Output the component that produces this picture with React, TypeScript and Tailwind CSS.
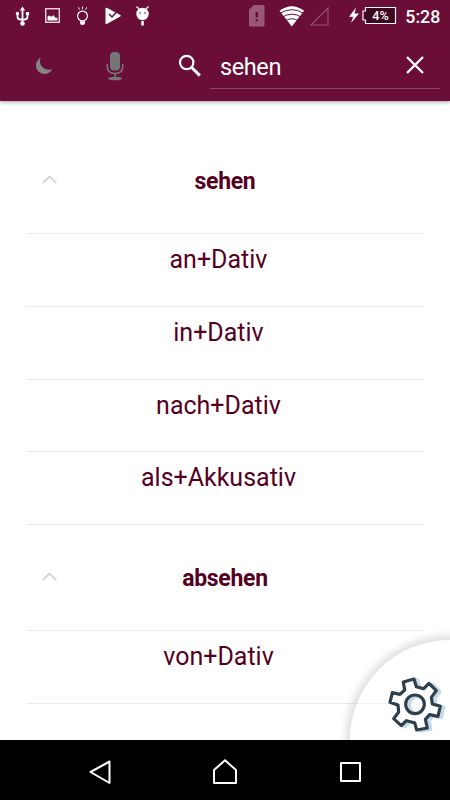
import type { ReactNode } from 'react';

const groups = [
    { verb: 'sehen', cases: ['an+Dativ', 'in+Dativ', 'nach+Dativ', 'als+Akkusativ'] },
    { verb: 'absehen', cases: ['von+Dativ'] },
];

const gearPath =
    'M58 24L90 15 97 38 119 44 135 28 157 50 142 70 145 90 169 97 162 127 137 122 124 136 130 162 98 168 92 146 67 140 52 155 29 134 44 114 42 93 18 85 25 56 48 61 62 48z';

function StatusBar() {
    return (
        <svg className="block h-8 w-full" viewBox="0 0 450 32" fill="#fff">
            {/* USB */}
            <g fill="none" stroke="#fff" strokeWidth="1.8">
                <path d="M22.500 9v14M17.500 13v3.500q0 3 3 3h4q3 0 3-3V13" />
            </g>
            <path d="M22.500 6.500l2.700 4h-5.400z" />
            <circle cx="22.500" cy="23.500" r="2.300" />
            <circle cx="17.500" cy="13.500" r="1.700" />
            <path d="M25.900 12h3.200v3.200h-3.200z" />

            {/* Picture */}
            <rect x="45.700" y="8.700" width="13.600" height="13.600" fill="none" stroke="#e6d5dc" strokeWidth="1.400" />
            <path d="M47.500 20.500v-4l1.500-1 2.500 1.200 2-1.700 1.500 2.500 2.500.5v2.500z" />

            {/* Bulb */}
            <circle cx="82.500" cy="16" r="4.900" fill="none" stroke="#fff" strokeWidth="1.200" />
            <path d="M80 21.300h5v1.700q0 2-2.500 2t-2.500-2z" />
            <path d="M82.500 6.500v2.800M78.300 7.300l1.200 2.400M86.700 7.300l-1.200 2.400" stroke="#fff" strokeWidth="0.900" />

            {/* Play check */}
            <path d="M105.500 8.500q0-1.200 1.200-.7L120.300 15q1 .7 0 1.400L106.700 24q-1.200.3-1.200-.8z" />
            <path d="M109 14l3 3 6.500-7" fill="none" stroke="#6a0e38" strokeWidth="1.500" />

            {/* Droid */}
            <circle cx="142.500" cy="14" r="6.200" />
            <path d="M136.500 6.500l3 3M148.500 6.500l-3 3" stroke="#fff" strokeWidth="1.300" />
            <path d="M141.300 21h2.500v4.500h-2.500z" />
            <circle cx="140" cy="13" r=".8" fill="#6a0e38" />
            <circle cx="145" cy="13" r=".8" fill="#6a0e38" />

            {/* SIM */}
            <path d="M254 5h9q1.500 0 1.500 1.500v18.500q0 1.500-1.500 1.500h-12.500q-1.500 0-1.500-1.500V9.500z" fill="#9a5878" />
            <path d="M255.600 12h2.400v5.500h-2.400zM255.600 19.300h2.400v2.200h-2.400z" fill="#6a0e38" />

            {/* Wi-Fi */}
            <path d="M279.500 10.800Q291.800 1.500 304.100 10.800L291.800 26.500z" />
            <g fill="none" stroke="#6a0e38" strokeWidth="1">
                <path d="M280 13.300q11.800-7.300 23.600 0M282 17.300q9.800-6.300 19.600 0M285 21q6.800-4.500 13.600 0" />
            </g>

            {/* Signal */}
            <path d="M328 8v17h-17z" fill="none" stroke="#935071" strokeWidth="1.200" />

            {/* Battery */}
            <path d="M356 7.500l-7 9.200h4.200l-2.200 6.300 8-9.500h-4.500z" />
            <path d="M365.500 7.500h30v16h-30v-3.500h-2.500v-9h2.500z" fill="#3d0820" stroke="#fff" strokeWidth="1.200" />
            <text x="372.300" y="19.800" textLength="16.500" lengthAdjust="spacingAndGlyphs" className="font-[Roboto] text-[12.500px] font-medium">4%</text>
            <text x="405.300" y="22.800" textLength="35" lengthAdjust="spacingAndGlyphs" className="font-[Roboto] text-[18.500px] font-medium">5:28</text>
        </svg>
    );
}

function Toolbar() {
    return (
        <div className="flex h-[69px]">
            <svg className="h-[69px] w-[210px] shrink-0" viewBox="0 32 210 69">
                <path d="M40.500 57.800A8.600 8.600 0 1 0 52.200 69.300C44.500 71.500 37.800 65 40.500 57.800z" fill="#858585" />
                <rect x="110" y="52" width="10" height="18.500" rx="4" fill="#767676" />
                <path d="M107.300 64v2.500q0 7 7.700 7t7.700-7V64M115 73.500v5" fill="none" stroke="#767676" strokeWidth="1.600" />
                <ellipse cx="115" cy="78.500" rx="7" ry="1.700" fill="#767676" />
                <circle cx="186.700" cy="62.500" r="6.700" fill="none" stroke="#fff" strokeWidth="2.200" />
                <path d="M191.500 67.300l8.300 8.300" stroke="#fff" strokeWidth="3" />
            </svg>
            <div className="mr-2.5 flex h-[57px] flex-1 items-center justify-between border-b border-[#8b456a] pr-4 pl-2.5">
                <span className="mt-3.5 text-[23.500px] leading-7 tracking-[-0.400px] text-white">sehen</span>
                <svg className="mt-2.5 size-[18px]" viewBox="0 0 18 18" fill="none" stroke="#fff" strokeWidth="2.300">
                    <path d="M1 1l16 16M17 1L1 17" />
                </svg>
            </div>
        </div>
    );
}

function Row({ children }: { children: ReactNode }) {
    return (
        <div className="h-[72.800px] border-b border-[#ececec] pt-[10px] pr-[13px] text-center text-[25px] leading-8">
            {children}
        </div>
    );
}

function SettingsCorner() {
    return (
        <div className="absolute right-0 bottom-0 h-[116px] w-[116px] overflow-hidden">
            <div className="absolute top-4 left-4 size-[200px] rounded-full bg-white/40 shadow-[0_0_9px_4px_rgba(0,0,0,0.14)]" />
            <svg className="absolute right-1 bottom-1 size-[62px]" viewBox="0 0 186 186" fill="none" strokeLinejoin="round">
                <g transform="translate(10 3)" stroke="#c6d9ea" strokeWidth="11">
                    <path d={gearPath} />
                    <circle cx="93" cy="91" r="27" />
                </g>
                {/* Face of the gear, with the hub left open */}
                <path d={gearPath + 'M120 91a27 27 0 1 0-54 0a27 27 0 1 0 54 0z'} fill="#fff" fillRule="evenodd" />
                <g stroke="#2f3f4b" strokeWidth="9.500">
                    <path d={gearPath} />
                    <circle cx="93" cy="91" r="28" />
                </g>
            </svg>
        </div>
    );
}

export default function App() {
    return (
        <div className="relative flex h-[800px] w-[450px] flex-col overflow-hidden bg-white font-[Roboto,sans-serif] text-[#56001f]">
            <header className="relative z-10 h-[101px] shrink-0 bg-[#6a0e38] shadow-[0_1px_4px_rgba(0,0,0,0.4)]">
                <StatusBar />
                <Toolbar />
            </header>

            <main className="relative flex-1 overflow-hidden px-[26px] pt-[27px]">
                {groups.map((group) => (
                    <section key={group.verb}>
                        <div className="relative flex h-[106px] items-center justify-center border-b border-[#ececec] pt-[4px]">
                            <svg className="absolute top-[47px] left-4 h-[9px] w-[15px]" viewBox="0 0 15 9" fill="none" stroke="#d4d4d4" strokeWidth="1.800">
                                <path d="M.7 8L7.500 1.500 14.300 8" />
                            </svg>
                            <h2 className="text-[23px] font-bold tracking-[-0.300px]">{group.verb}</h2>
                        </div>
                        {group.cases.map((c) => (
                            <Row key={c}>{c}</Row>
                        ))}
                    </section>
                ))}
                <SettingsCorner />
            </main>

            <nav className="h-[60px] shrink-0 bg-black">
                <svg className="block h-[60px] w-full" viewBox="0 740 450 60" fill="none" stroke="#fff" strokeWidth="2" strokeLinejoin="round">
                    <path d="M109.500 761.500v21.500L90.500 772z" />
                    <path d="M225 760.300l-11 9.700v13h22v-13z" />
                    <path d="M341 763h19v18h-19z" />
                </svg>
            </nav>
        </div>
    );
}
